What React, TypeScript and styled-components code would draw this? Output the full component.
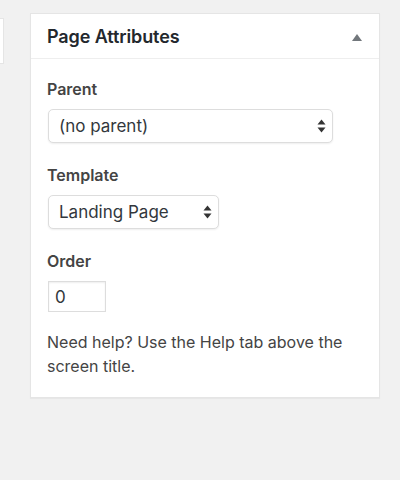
import styled, { createGlobalStyle } from 'styled-components';

const GlobalStyle = createGlobalStyle`
    html, body {
        margin: 0;
        padding: 0;
        background: #f1f1f1;
        font-family: Inter, "Open Sans", "Liberation Sans", sans-serif;
        -webkit-font-smoothing: antialiased;
    }
`;

const Screen = styled.div`
    display: flex;
    align-items: flex-start;
    width: 400px;
    height: 480px;
    overflow: hidden;
`;

const SideStub = styled.div`
    flex: 0 0 3px;
    height: 44px;
    margin-top: 18px;
    background: #fff;
    border: 1px solid #e5e5e5;
    border-left: none;
`;

const Postbox = styled.div`
    flex: 0 0 348px;
    margin: 13px 0 0 26px;
    background: #fff;
    border: 1px solid #e5e5e5;
    box-shadow: 0 1px 1px rgba(0, 0, 0, 0.04);
`;

const Header = styled.div`
    display: flex;
    align-items: center;
    justify-content: space-between;
    height: 44px;
    padding: 0 17px 0 16px;
    border-bottom: 1px solid #eee;
`;

const Title = styled.h2`
    margin: 0;
    font-size: 18px;
    font-weight: 600;
    color: #23282d;
    letter-spacing: -0.1px;
`;

const ToggleArrow = styled.span`
    width: 0;
    height: 0;
    margin-top: 2px;
    border-left: 5px solid transparent;
    border-right: 5px solid transparent;
    border-bottom: 7px solid #72777c;
`;

const Inside = styled.div`
    display: flex;
    flex-direction: column;
    align-items: flex-start;
    padding: 20px 16px 19px;
`;

const Label = styled.label`
    font-size: 16px;
    font-weight: 600;
    color: #444;
    line-height: 20px;
    margin: ${props => (props.$first ? '0' : '22px')} 0 10px;
`;

const SelectWrap = styled.div`
    position: relative;
    width: ${props => props.$width}px;
    margin-left: 1px;
`;

const Select = styled.select`
    appearance: none;
    -webkit-appearance: none;
    display: block;
    width: 100%;
    height: 34px;
    padding: 0 24px 0 10px;
    border: 1px solid #ddd;
    border-radius: 5px;
    background: #fff;
    box-shadow: 0 1px 2px rgba(0, 0, 0, 0.07);
    font-family: inherit;
    font-size: 17px;
    color: #32373c;
    outline: none;
`;

const Arrows = styled.svg`
    position: absolute;
    right: 7px;
    top: 10px;
    pointer-events: none;
`;

const NumberInput = styled.input`
    width: 58px;
    height: 31px;
    box-sizing: border-box;
    margin-left: 1px;
    padding: 0 6px;
    border: 1px solid #ddd;
    box-shadow: inset 0 1px 2px rgba(0, 0, 0, 0.07);
    font-family: inherit;
    font-size: 17px;
    color: #32373c;
    outline: none;
`;

const Help = styled.p`
    margin: 18px 0 0;
    font-size: 16px;
    line-height: 24px;
    color: #444;
`;

const SelectArrows = () => (
    <Arrows width="9" height="14" viewBox="0 0 9 14">
        <path d="M4.5 0.5 L8.5 5.5 L0.5 5.5 Z" fill="#333" />
        <path d="M4.5 13.5 L8.5 8.5 L0.5 8.5 Z" fill="#333" />
    </Arrows>
);

const Dropdown = ({ width, value, options }: { width: number; value: string; options: string[] }) => (
    <SelectWrap $width={width}>
        <Select defaultValue={value}>
            {options.map(o => <option key={o} value={o}>{o}</option>)}
        </Select>
        <SelectArrows />
    </SelectWrap>
);

export default function App() {
    return (
        <>
            <GlobalStyle />
            <Screen>
                <SideStub />
                <Postbox>
                    <Header>
                        <Title>Page Attributes</Title>
                        <ToggleArrow />
                    </Header>
                    <Inside>
                        <Label $first>Parent</Label>
                        <Dropdown width={285} value="(no parent)" options={['(no parent)', 'Home', 'About']} />
                        <Label>Template</Label>
                        <Dropdown width={171} value="Landing Page" options={['Default Template', 'Landing Page']} />
                        <Label>Order</Label>
                        <NumberInput type="text" defaultValue="0" />
                        <Help>Need help? Use the Help tab above the screen title.</Help>
                    </Inside>
                </Postbox>
            </Screen>
        </>
    );
}
